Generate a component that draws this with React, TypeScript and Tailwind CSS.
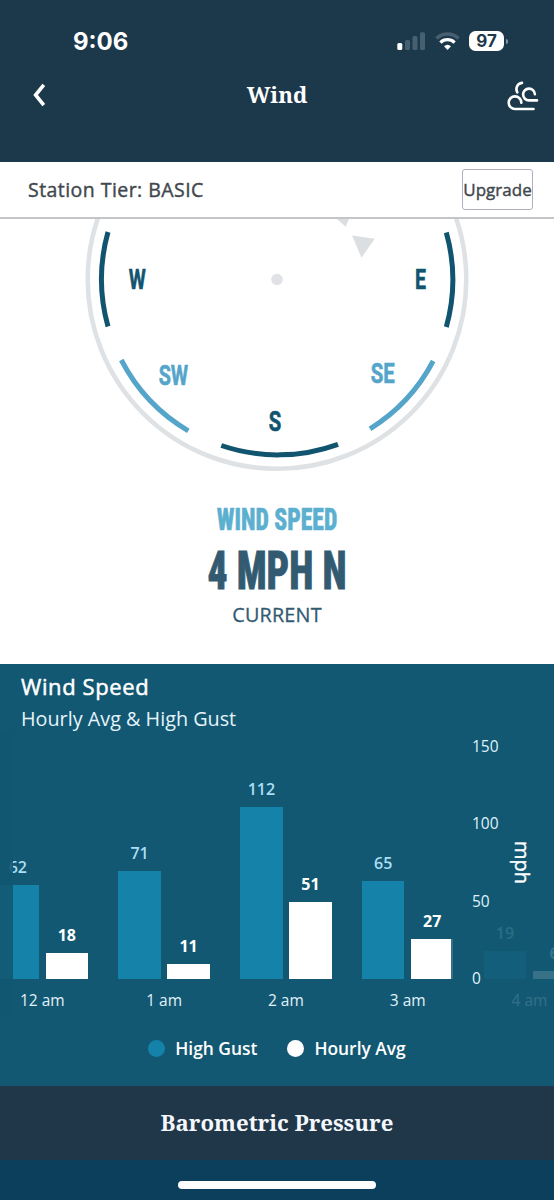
interface Hour {
  label: string;
  gust: number;
  avg: number;
  gustHeight: number;
  avgHeight: number;
}

const hours: Hour[] = [
  { label: "12 am", gust: 62, avg: 18, gustHeight: 94, avgHeight: 26.5 },
  { label: "1 am", gust: 71, avg: 11, gustHeight: 108.5, avgHeight: 15.5 },
  { label: "2 am", gust: 112, avg: 51, gustHeight: 172, avgHeight: 77 },
  { label: "3 am", gust: 65, avg: 27, gustHeight: 98, avgHeight: 40.5 },
  { label: "4 am", gust: 19, avg: 6, gustHeight: 28, avgHeight: 8.5 },
];

const ticks = [150, 100, 50, 0];

function StatusBar() {
  return (
    <div className="flex h-[62px] items-start justify-between pl-[73px] pr-[46.5px]">
      <span className="pt-[27px] font-['Inter',sans-serif] text-[24px] font-bold leading-[30px] text-white">
        9:06
      </span>
      <div className="flex items-start pt-[31px]">
        <svg width="32" height="20" viewBox="0 0 32 20">
          <rect x="0.300" y="12" width="5" height="7" rx="1.500" fill="#fff" />
          <rect x="8" y="9" width="5" height="10" rx="1.500" fill="#466071" />
          <rect x="15.500" y="5" width="5" height="14" rx="1.500" fill="#466071" />
          <rect x="23" y="1.300" width="5" height="17.700" rx="1.500" fill="#466071" />
        </svg>
        <svg className="ml-[6px]" width="25" height="20" viewBox="0 0 25 20" fill="none">
          <path d="M1.500 7.500a15.800 15.800 0 0 1 22 0" stroke="#466071" strokeWidth="3.400" />
          <path d="M5.400 11.600a10.200 10.200 0 0 1 14.200 0" stroke="#fff" strokeWidth="3.200" />
          <path d="M12.500 19l-3.500-3.700a5.200 5.200 0 0 1 7 0z" fill="#fff" />
        </svg>
        <div className="ml-[9px] flex h-[20px] w-[35px] items-center justify-center rounded-[6.5px] bg-white font-['Inter',sans-serif] text-[17px] font-bold leading-none text-[#1c384b]">
          97
        </div>
        <span className="ml-[1.5px] mt-[8px] h-[5px] w-[2px] rounded-r bg-[#8296a3]" />
      </div>
    </div>
  );
}

function NavBar() {
  return (
    <div className="grid h-[66px] grid-cols-[100px_1fr_100px] items-center text-white">
      <svg className="ml-[31px]" width="16" height="26" viewBox="0 0 16 26" fill="none">
        <path d="M12.800 2.800L4.600 13l8.200 10.200" stroke="#fff" strokeWidth="3.600" />
      </svg>
      <h1 className="text-center font-['Noto_Serif',serif] text-[22.2px] font-bold">Wind</h1>
      <svg
        className="ml-[52px]"
        width="34"
        height="34"
        viewBox="0 0 34 34"
        fill="none"
        stroke="#fff"
        strokeWidth="2.600"
        strokeLinecap="round"
      >
        <path d="M27.500 31H9a6.300 6.300 0 1 1 6.300-6.300" />
        <path d="M31 22.400h-8a5.900 5.900 0 1 1 5.900-6.200" />
        <path d="M16 4.900c-4.500.6-7 5.200-4.700 9.500" />
      </svg>
    </div>
  );
}

function Compass() {
  return (
    <svg
      className="block"
      width="554"
      height="255"
      viewBox="0 219 554 255"
      fill="none"
      fontFamily="Roboto, sans-serif"
      fontSize="28.500"
      fontWeight="700"
    >
      <circle cx="277" cy="279.500" r="189.300" stroke="#dfe2e5" strokeWidth="4.600" />
      <circle cx="277" cy="279.500" r="5.800" fill="#e0e2e5" />
      <path d="M337 219h12l-3.300 7.800z" fill="#dcdfe2" />
      <path d="M352 235.500l22.800 3.200-13.300 19z" fill="#dcdfe2" />
      <g stroke="#10546f" strokeWidth="5">
        <path d="M108 232a175.700 175.700 0 0 0 0 94.500" />
        <path d="M446.300 232.500a175.700 175.700 0 0 1 0 94.500" />
        <path d="M221.300 445.500A175.700 175.700 0 0 0 338 444.300" />
      </g>
      <g stroke="#55a5ca" strokeWidth="5">
        <path d="M121.300 360a175.700 175.700 0 0 0 67 70.800" />
        <path d="M433.200 361a175.700 175.700 0 0 1-63.200 67.800" />
      </g>
      <g fill="#10546f" stroke="#10546f" strokeWidth="0.600">
        <text x="128.800" y="289.200" textLength="17" lengthAdjust="spacingAndGlyphs">W</text>
        <text x="415" y="289.200" textLength="11" lengthAdjust="spacingAndGlyphs">E</text>
        <text x="268.800" y="431.200" textLength="12.500" lengthAdjust="spacingAndGlyphs">S</text>
      </g>
      <g fill="#55a5ca" stroke="#55a5ca" strokeWidth="0.600">
        <text x="158.700" y="384.500" textLength="29.500" lengthAdjust="spacingAndGlyphs">SW</text>
        <text x="370.700" y="383" textLength="24" lengthAdjust="spacingAndGlyphs">SE</text>
      </g>
    </svg>
  );
}

function HourGroup({ hour }: { hour: Hour }) {
  return (
    <div className="w-[121.8px] shrink-0">
      <div className="flex h-[210px] items-end justify-center gap-[6.5px]">
        <div className="w-[42.5px] text-center">
          <p className="mb-[7px] text-[16px] font-semibold leading-[22px] text-[#a9def5]">{hour.gust}</p>
          <div className="bg-[#1582aa]" style={{ height: hour.gustHeight }} />
        </div>
        <div className="w-[42.5px] text-center">
          <p className="mb-[7px] text-[16px] font-bold leading-[22px] text-white">{hour.avg}</p>
          <div className="bg-white" style={{ height: hour.avgHeight }} />
        </div>
      </div>
      <p className="mt-[9px] text-center text-[15.5px] leading-[24px] text-[#e2f2fa]">{hour.label}</p>
    </div>
  );
}

function WindChart() {
  return (
    <section className="h-[422px] shrink-0 bg-[#135872] pt-[7px] text-white">
      <h2 className="pl-[21px] text-[22px] leading-[30px] tracking-[0.6px] [-webkit-text-stroke:0.5px]">Wind Speed</h2>
      <p className="pl-[21px] pt-px text-[19.8px] leading-[34px] text-[#e4f4fb]">Hourly Avg &amp; High Gust</p>
      <div className="relative mt-[-5px] h-[286px] overflow-hidden">
        <div className="ml-[-18.6px] flex pt-[38px]">
          {hours.map((hour) => (
            <HourGroup key={hour.label} hour={hour} />
          ))}
        </div>
        <div className="absolute inset-y-0 left-0 w-[12.5px] bg-[#135872]/90" />
        <div className="absolute inset-y-0 right-0 flex w-[103px] bg-[#135872]/85">
          <div className="flex w-[48px] flex-col pl-[21px] pt-[2.5px]">
            {ticks.map((tick) => (
              <span key={tick} className="h-[77.5px] shrink-0 text-[15.5px] leading-[24px] text-[#dff2fb]">
                {tick}
              </span>
            ))}
          </div>
          <span className="ml-[9px] mt-[110px] h-[44px] text-[20px] leading-[28px] [-webkit-text-stroke:0.4px] [writing-mode:vertical-rl]">
            mph
          </span>
        </div>
      </div>
      <div className="flex items-center justify-center gap-[30px] pt-[17px] text-[17.4px] font-semibold leading-[28px]">
        <span className="flex items-center gap-[10px]">
          <i className="size-[17px] rounded-full bg-[#1582aa]" />
          High Gust
        </span>
        <span className="flex items-center gap-[10px]">
          <i className="size-[17px] rounded-full bg-white" />
          Hourly Avg
        </span>
      </div>
    </section>
  );
}

export default function App() {
  return (
    <div className="flex h-[1200px] w-[554px] flex-col overflow-hidden bg-white font-['Open_Sans',sans-serif]">
      <header className="h-[162px] shrink-0 bg-[#1c384b]">
        <StatusBar />
        <NavBar />
      </header>
      <div className="flex h-[57px] shrink-0 items-center justify-between border-b-2 border-[#c3c5c8] pl-[28px] pr-[21px] text-[#41474d]">
        <span className="text-[19.500px] tracking-[0.45px] [-webkit-text-stroke:0.4px]">Station Tier: BASIC</span>
        <button className="flex h-[41px] w-[71px] items-center justify-center rounded-[3px] border border-[#b5acc0] text-[17px] [-webkit-text-stroke:0.4px]">
          Upgrade
        </button>
      </div>
      <main className="h-[445px] shrink-0 text-center">
        <Compass />
        <p className="mt-[27px] origin-center scale-x-[.765] font-['Roboto',sans-serif] text-[31px] font-extrabold leading-[38px] text-[#5bb0d0] [-webkit-text-stroke:0.6px] [font-stretch:75%]">
          WIND SPEED
        </p>
        <p className="mt-[4px] origin-center scale-x-[.745] font-['Roboto',sans-serif] text-[53px] font-extrabold leading-[56px] text-[#325b72] [-webkit-text-stroke:1px] [font-stretch:75%]">
          4 MPH N
        </p>
        <p className="mt-[2px] text-[19.800px] leading-[28px] tracking-[0.2px] text-[#325b72] [-webkit-text-stroke:0.3px]">
          CURRENT
        </p>
      </main>
      <WindChart />
      <div className="flex h-[74px] shrink-0 items-center justify-center bg-[#20374a]">
        <h2 className="font-['Noto_Serif',serif] text-[22.200px] font-bold text-[#f4f8fc]">Barometric Pressure</h2>
      </div>
      <footer className="flex flex-1 justify-center bg-[#0c3f5c] pt-[21px]">
        <span className="h-[8px] w-[198px] rounded-full bg-white" />
      </footer>
    </div>
  );
}
